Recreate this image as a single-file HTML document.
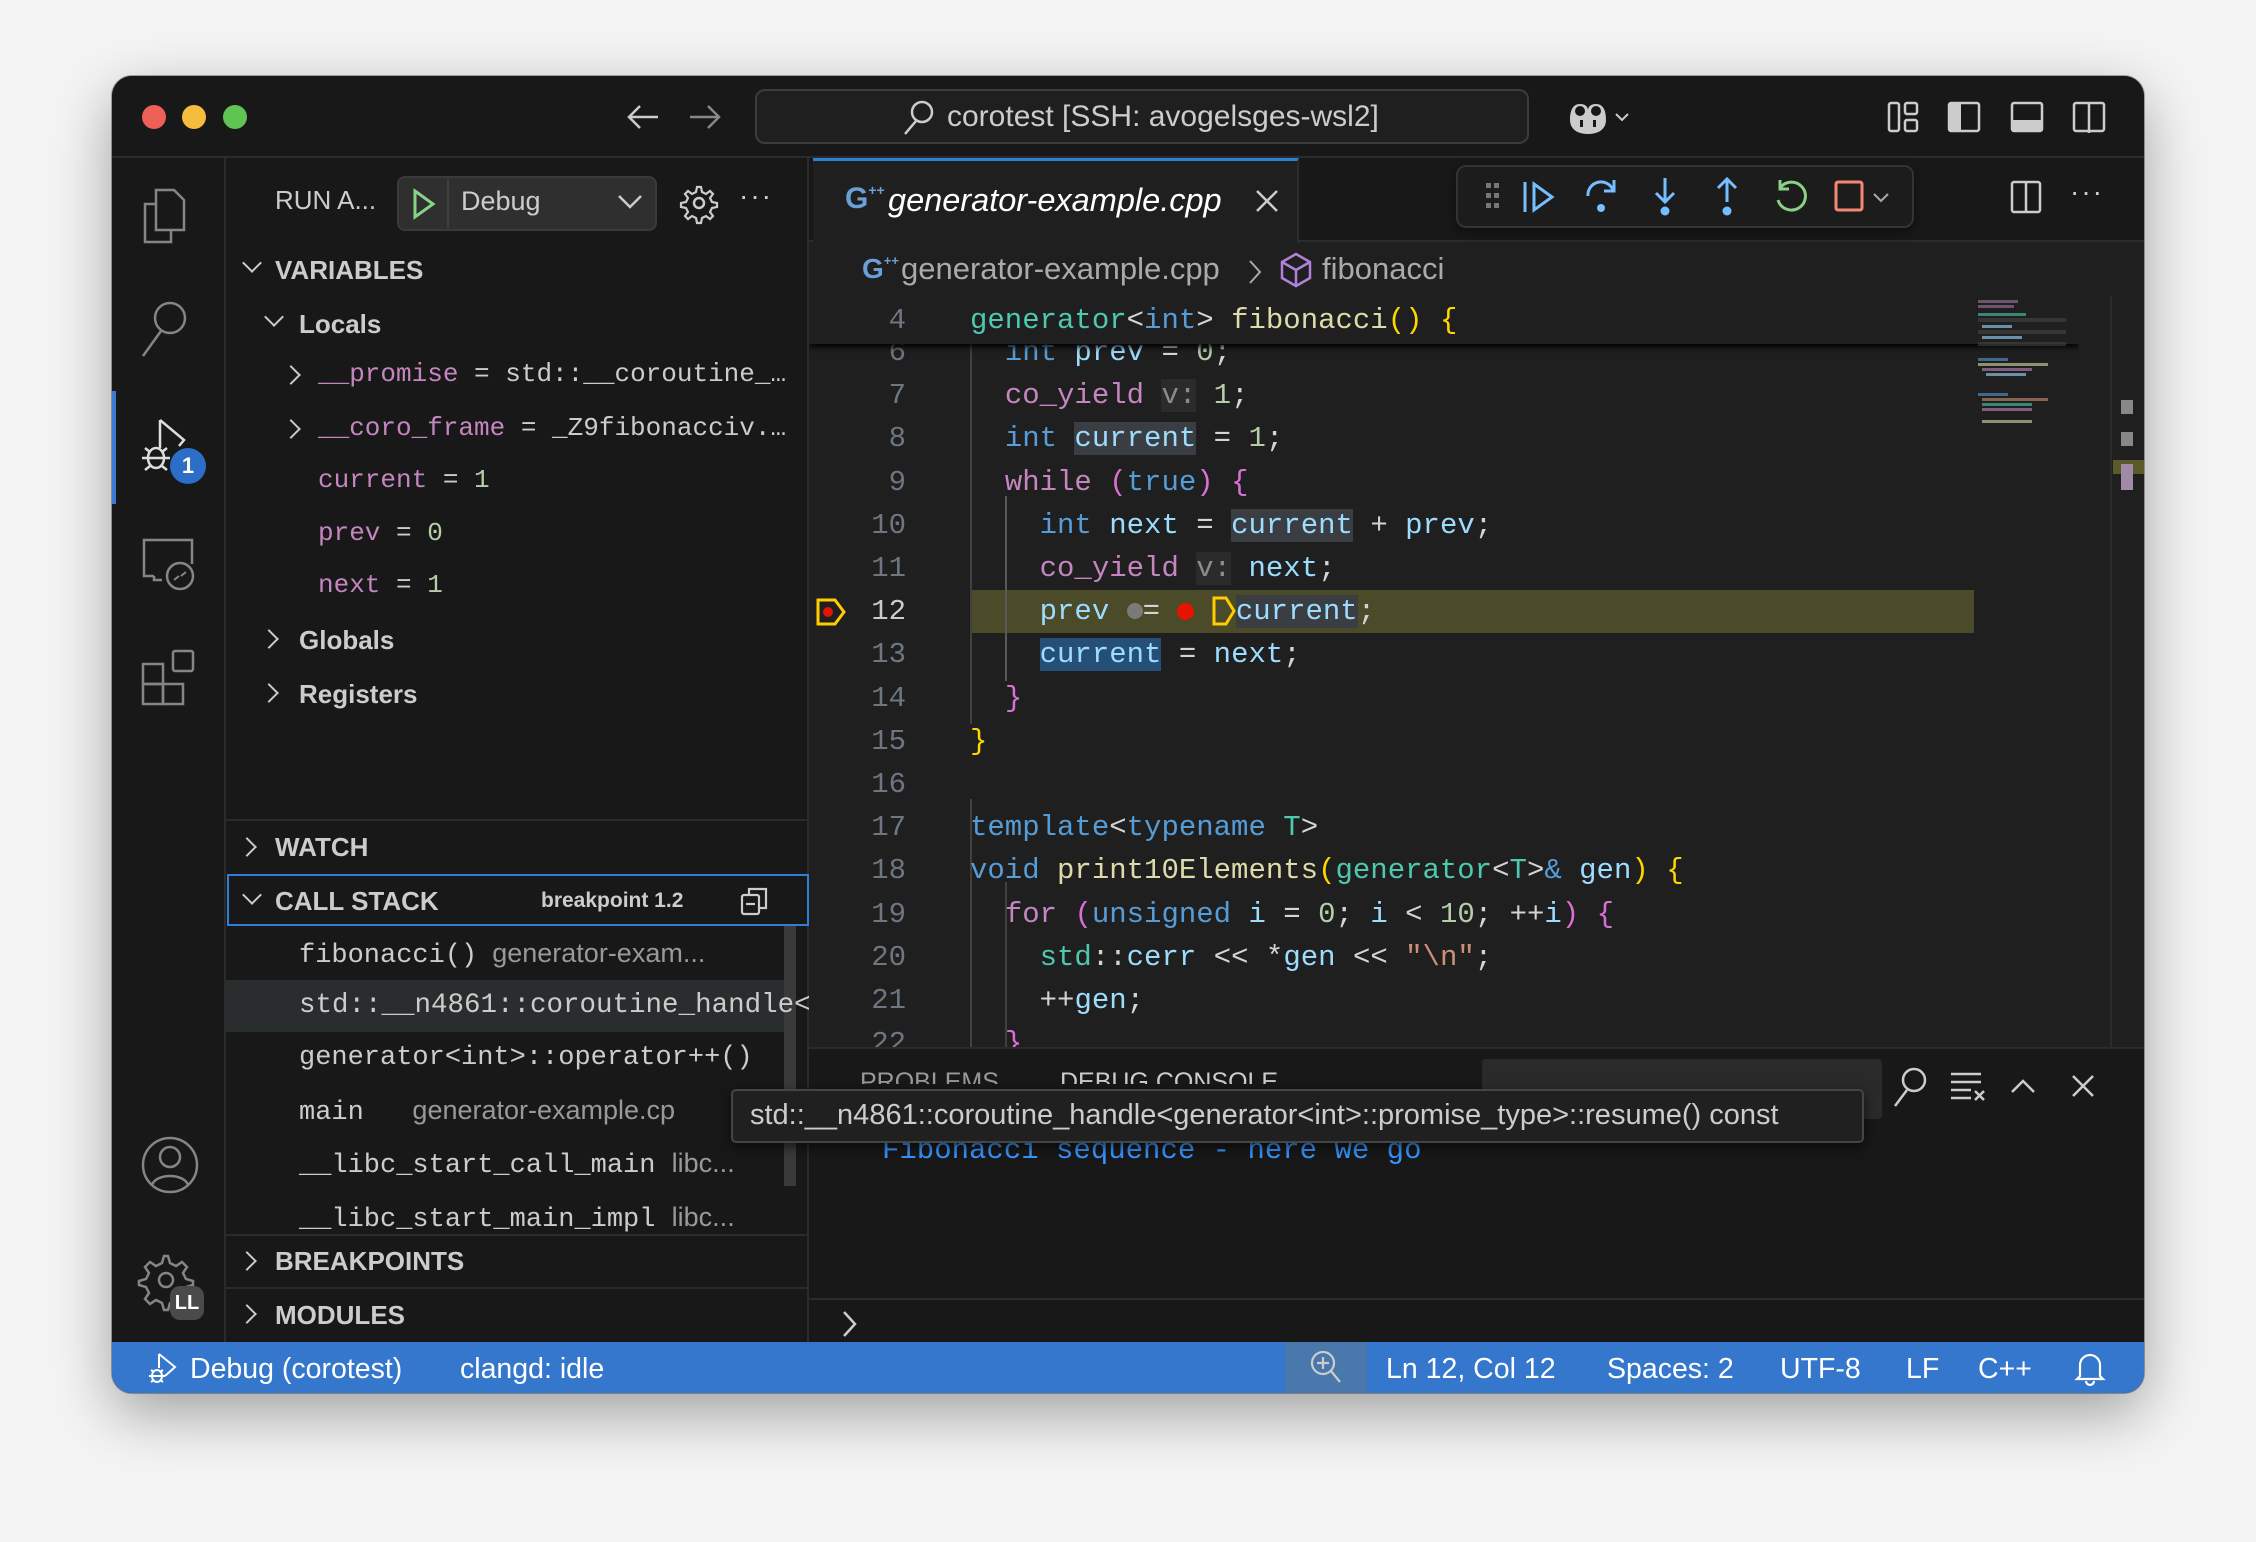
<!DOCTYPE html>
<html><head><meta charset="utf-8"><style>
*{margin:0;padding:0;box-sizing:border-box}
body{width:2256px;height:1542px;background:#f4f4f4;position:relative;overflow:hidden;font-family:"Liberation Sans",sans-serif}
.a{position:absolute}
#win{left:112px;top:76px;width:2032px;height:1317px;border-radius:20px;background:#181818;overflow:hidden;box-shadow:0 20px 60px rgba(0,0,0,.35),0 0 0 1px rgba(0,0,0,.3)}
.mono{font-family:"Liberation Mono",monospace}
.t{white-space:pre;color:#ccc}
.code{font-family:"Liberation Mono",monospace;font-size:29px;white-space:pre;height:43.2px;line-height:43.2px}
.ln{font-family:"Liberation Mono",monospace;font-size:29px;color:#6e7681;text-align:right;width:100px;line-height:43.2px;height:43.2px}
.k{color:#569cd6}.c{color:#c586c0}.ty{color:#4ec9b0}.f{color:#dcdcaa}.v{color:#9cdcfe}.n{color:#b5cea8}.s{color:#ce9178}.w{color:#d4d4d4}
.y{color:#ffd700}.p{color:#da70d6}.b{color:#179fff}
.hint{background:#2b2b2b;color:#8b8b8b}
.sel{background:#3a3d41}
.sb{font-size:26px;font-weight:bold;color:#ccc}
.var{font-family:"Liberation Mono",monospace;font-size:25.5px;white-space:pre}
.chev{width:14px;height:14px;border-right:2.5px solid #ccc;border-bottom:2.5px solid #ccc}
svg{position:absolute;overflow:visible}
</style></head><body>
<div id="win" class="a">
<!-- title bar -->
<div class="a" style="left:0;top:0;width:2032px;height:82px;background:#181818;border-bottom:2px solid #2b2b2b"></div>
<div class="a" style="left:30px;top:29px;width:24px;height:24px;border-radius:50%;background:#ee5f57"></div>
<div class="a" style="left:70px;top:29px;width:24px;height:24px;border-radius:50%;background:#f6bd3c"></div>
<div class="a" style="left:111px;top:29px;width:24px;height:24px;border-radius:50%;background:#5fc453"></div>
<svg style="left:514px;top:28px" width="34" height="26"><path d="M32 13H3M14 2L3 13l11 11" stroke="#ccc" stroke-width="2.5" fill="none"/></svg>
<svg style="left:576px;top:28px" width="34" height="26"><path d="M2 13h29M20 2l11 11-11 11" stroke="#888" stroke-width="2.5" fill="none"/></svg>
<div class="a" style="left:643px;top:13px;width:774px;height:55px;border:2px solid #3c3c3c;border-radius:10px;background:#1f1f1f"></div>
<svg style="left:790px;top:24px" width="32" height="36"><circle cx="20" cy="12" r="10" stroke="#ccc" stroke-width="2.5" fill="none"/><path d="M14 21L3 34" stroke="#ccc" stroke-width="2.5"/></svg>
<div class="a t" style="left:835px;top:24px;font-size:30px;color:#ccc">corotest [SSH: avogelsges-wsl2]</div>
<svg style="left:1452px;top:22px" width="70" height="40"><path d="M6 22c0-8 2-16 10-16s8 6 8 6 0-6 8-6 10 8 10 16-6 14-18 14S6 30 6 22z" fill="#ccc"/><ellipse cx="16" cy="13" rx="5" ry="5" fill="#181818"/><ellipse cx="32" cy="13" rx="5" ry="5" fill="#181818"/><rect x="16" y="22" width="3" height="7" fill="#181818"/><rect x="29" y="22" width="3" height="7" fill="#181818"/><path d="M52 16l6 6 6-6" stroke="#ccc" stroke-width="2" fill="none"/></svg>
<svg style="left:1775px;top:25px" width="34" height="32"><rect x="2" y="2" width="10" height="28" rx="2" stroke="#ccc" stroke-width="2.5" fill="none"/><rect x="18" y="2" width="12" height="11" rx="2" stroke="#ccc" stroke-width="2.5" fill="none"/><rect x="18" y="19" width="12" height="11" rx="2" stroke="#ccc" stroke-width="2.5" fill="none"/></svg>
<svg style="left:1835px;top:25px" width="34" height="32"><rect x="2" y="2" width="30" height="28" rx="2" stroke="#ccc" stroke-width="2.5" fill="none"/><rect x="2" y="2" width="12" height="28" fill="#ccc"/></svg>
<svg style="left:1898px;top:25px" width="34" height="32"><rect x="2" y="2" width="30" height="28" rx="2" stroke="#ccc" stroke-width="2.5" fill="none"/><rect x="2" y="19" width="30" height="11" fill="#ccc"/></svg>
<svg style="left:1960px;top:25px" width="34" height="32"><rect x="2" y="2" width="30" height="28" rx="2" stroke="#ccc" stroke-width="2.5" fill="none"/><path d="M17 2v30" stroke="#ccc" stroke-width="2.5"/></svg>

<!-- activity bar -->
<div class="a" style="left:0;top:82px;width:114px;height:1184px;background:#181818;border-right:2px solid #2b2b2b"></div>
<div class="a" style="left:0;top:315px;width:4px;height:113px;background:#3a7bd5"></div>
<svg style="left:30px;top:112px" width="44" height="56"><path d="M14 2h18l10 10v30H14z" stroke="#858585" stroke-width="2.5" fill="none"/><path d="M14 16H3v38h26V42" stroke="#858585" stroke-width="2.5" fill="none"/></svg>
<svg style="left:28px;top:222px" width="50" height="62"><circle cx="30" cy="20" r="15" stroke="#858585" stroke-width="2.5" fill="none"/><path d="M21 33L3 58" stroke="#858585" stroke-width="2.5"/></svg>
<svg style="left:28px;top:342px" width="70" height="60"><path d="M20 2v28M20 2l24 20-5 6" stroke="#ddd" stroke-width="2.5" fill="none"/><ellipse cx="16" cy="40" rx="8" ry="10" stroke="#ddd" stroke-width="2.5" fill="none"/><path d="M2 40h28M5 30l5 4M27 30l-5 4M5 52l5-4M27 52l-5-4" stroke="#ddd" stroke-width="2.5"/></svg>
<div class="a" style="left:58px;top:372px;width:36px;height:36px;border-radius:50%;background:#2c6dc7;color:#fff;font-size:22px;font-weight:bold;text-align:center;line-height:36px">1</div>
<svg style="left:28px;top:460px" width="56" height="56"><path d="M14 40H4V4h48v24M14 40v4h8" stroke="#858585" stroke-width="2.5" fill="none"/><circle cx="40" cy="40" r="13" stroke="#858585" stroke-width="2.5" fill="none"/><path d="M34 44l5-4M46 36l-5 4" stroke="#858585" stroke-width="2"/></svg>
<svg style="left:28px;top:572px" width="60" height="60"><rect x="3" y="16" width="20" height="20" stroke="#858585" stroke-width="2.5" fill="none"/><rect x="3" y="36" width="20" height="20" stroke="#858585" stroke-width="2.5" fill="none"/><rect x="23" y="36" width="20" height="20" stroke="#858585" stroke-width="2.5" fill="none"/><rect x="33" y="3" width="20" height="20" rx="2" stroke="#858585" stroke-width="2.5" fill="none"/></svg>
<svg style="left:28px;top:1059px" width="60" height="60"><circle cx="30" cy="30" r="27" stroke="#858585" stroke-width="2.5" fill="none"/><circle cx="30" cy="22" r="10" stroke="#858585" stroke-width="2.5" fill="none"/><path d="M12 50c4-12 32-12 36 0" stroke="#858585" stroke-width="2.5" fill="none"/></svg>
<svg style="left:26px;top:1176px" width="52" height="52"><path d="M26 4l4 0 2 7 6 3 6-4 5 5-4 6 3 6 7 2v4l-7 2-3 6 4 6-5 5-6-4-6 3-2 7h-4l-2-7-6-3-6 4-5-5 4-6-3-6-7-2v-4l7-2 3-6-4-6 5-5 6 4 6-3z" stroke="#858585" stroke-width="2.5" fill="none"/><circle cx="28" cy="28" r="7" stroke="#858585" stroke-width="2.5" fill="none"/></svg>
<div class="a" style="left:58px;top:1210px;width:34px;height:34px;border-radius:10px;background:#4a4a4a;color:#fff;font-size:20px;font-weight:bold;text-align:center;line-height:34px">LL</div>

<!-- sidebar -->
<div class="a" style="left:114px;top:82px;width:583px;height:1184px;background:#181818;border-right:2px solid #2b2b2b"></div>
<div class="a t" style="left:163px;top:109px;font-size:26px;color:#ccc">RUN A...</div>
<div class="a" style="left:285px;top:100px;width:260px;height:55px;border-radius:8px;background:#2f2f2f;border:2px solid #3a3a3a"></div>
<div class="a" style="left:335px;top:103px;width:2px;height:49px;background:#3f3f3f"></div>
<svg style="left:300px;top:112px" width="24" height="32"><path d="M3 3l18 13-18 13z" stroke="#89d185" stroke-width="3" fill="none"/></svg>
<div class="a t" style="left:349px;top:110px;font-size:27px;color:#ccc">Debug</div>
<svg style="left:505px;top:118px" width="26" height="16"><path d="M2 2l11 11 11-11" stroke="#ccc" stroke-width="2.5" fill="none"/></svg>
<svg style="left:568px;top:108px" width="38" height="38"><circle cx="19" cy="19" r="5" stroke="#ccc" stroke-width="2.5" fill="none"/><path d="M17 3h4l1 5 4 2 4-3 3 3-3 4 2 4 5 1v4l-5 1-2 4 3 4-3 3-4-3-4 2-1 5h-4l-1-5-4-2-4 3-3-3 3-4-2-4-5-1v-4l5-1 2-4-3-4 3-3 4 3 4-2z" stroke="#ccc" stroke-width="2.2" fill="none"/></svg>
<div class="a t" style="left:627px;top:104px;font-size:28px;color:#ccc;letter-spacing:2px">···</div>

<div class="a chev" style="left:133px;top:180px;transform:rotate(45deg)"></div>
<div class="a sb" style="left:163px;top:179px">VARIABLES</div>
<div class="a chev" style="left:155px;top:234px;transform:rotate(45deg)"></div>
<div class="a sb" style="left:187px;top:233px">Locals</div>
<div class="a chev" style="left:172px;top:292px;transform:rotate(-45deg)"></div>
<div class="a var" style="left:206px;top:283px;font-size:26px"><span class="c">__promise</span><span style="color:#ccc"> = std::__coroutine_…</span></div>
<div class="a chev" style="left:172px;top:346px;transform:rotate(-45deg)"></div>
<div class="a var" style="left:206px;top:337px;font-size:26px"><span class="c">__coro_frame</span><span style="color:#ccc"> = _Z9fibonacciv.…</span></div>
<div class="a var" style="left:206px;top:389px;font-size:26px"><span class="c">current</span><span style="color:#ccc"> = </span><span class="n">1</span></div>
<div class="a var" style="left:206px;top:442px;font-size:26px"><span class="c">prev</span><span style="color:#ccc"> = </span><span class="n">0</span></div>
<div class="a var" style="left:206px;top:494px;font-size:26px"><span class="c">next</span><span style="color:#ccc"> = </span><span class="n">1</span></div>
<div class="a chev" style="left:150px;top:556px;transform:rotate(-45deg)"></div>
<div class="a sb" style="left:187px;top:549px">Globals</div>
<div class="a chev" style="left:150px;top:610px;transform:rotate(-45deg)"></div>
<div class="a sb" style="left:187px;top:603px">Registers</div>

<div class="a" style="left:114px;top:743px;width:583px;height:2px;background:#2b2b2b"></div>
<div class="a chev" style="left:128px;top:764px;transform:rotate(-45deg)"></div>
<div class="a sb" style="left:163px;top:756px">WATCH</div>
<div class="a" style="left:115px;top:798px;width:582px;height:52px;border:2px solid #2f7fd8"></div>
<div class="a chev" style="left:133px;top:812px;transform:rotate(45deg)"></div>
<div class="a sb" style="left:163px;top:810px">CALL STACK</div>
<div class="a" style="left:429px;top:813px;font-size:21px;font-weight:bold;color:#ccc">breakpoint 1.2</div>
<svg style="left:628px;top:810px" width="30" height="30"><rect x="2" y="9" width="17" height="19" rx="2" stroke="#ccc" stroke-width="2.2" fill="none"/><path d="M9 9V3h17v19h-7" stroke="#ccc" stroke-width="2.2" fill="none"/><path d="M6 18h9" stroke="#ccc" stroke-width="2.2"/></svg>
<div class="a" style="left:114px;top:904px;width:570px;height:52px;background:#2a2d2e"></div>
<div class="a" style="left:672px;top:850px;width:12px;height:260px;background:#3a3a3a"></div>
<div class="a var" style="left:187px;top:862px;font-size:27px;color:#ccc">fibonacci()<span style="font-family:'Liberation Sans',sans-serif;color:#999">  generator-exam...</span></div>
<div class="a var" style="left:187px;top:914px;font-size:27.5px;color:#ccc;width:510px;overflow:hidden">std::__n4861::coroutine_handle&lt;g</div>
<div class="a var" style="left:187px;top:967px;font-size:27px;color:#ccc">generator&lt;int&gt;::operator++()</div>
<div class="a var" style="left:187px;top:1019px;font-size:27px;color:#ccc">main   <span style="font-family:'Liberation Sans',sans-serif;color:#999">generator-example.cp</span></div>
<div class="a var" style="left:187px;top:1072px;font-size:27px;color:#ccc">__libc_start_call_main <span style="font-family:'Liberation Sans',sans-serif;color:#999">libc...</span></div>
<div class="a var" style="left:187px;top:1126px;font-size:27px;color:#ccc">__libc_start_main_impl <span style="font-family:'Liberation Sans',sans-serif;color:#999">libc...</span></div>
<div class="a" style="left:114px;top:1158px;width:583px;height:2px;background:#2b2b2b"></div>
<div class="a chev" style="left:128px;top:1178px;transform:rotate(-45deg)"></div>
<div class="a sb" style="left:163px;top:1170px">BREAKPOINTS</div>
<div class="a" style="left:114px;top:1211px;width:583px;height:2px;background:#2b2b2b"></div>
<div class="a chev" style="left:128px;top:1231px;transform:rotate(-45deg)"></div>
<div class="a sb" style="left:163px;top:1224px">MODULES</div>

<!-- editor -->
<div class="a" style="left:697px;top:82px;width:1335px;height:889px;background:#1f1f1f"></div>
<div class="a" style="left:697px;top:82px;width:1335px;height:84px;background:#181818;border-bottom:2px solid #2b2b2b"></div>
<div class="a" style="left:701px;top:82px;width:486px;height:85px;background:#1f1f1f;border-top:3px solid #2f7fd8;border-right:2px solid #2b2b2b"></div>
<div class="a" style="left:733px;top:106px;font-size:30px;font-weight:bold;color:#6a9fd8">G<span style="font-size:14px;vertical-align:top">++</span></div>
<div class="a t" style="left:776px;top:106px;font-size:32.5px;font-style:italic;color:#fff">generator-example.cpp</div>
<svg style="left:1143px;top:113px" width="24" height="24"><path d="M2 2l20 20M22 2L2 22" stroke="#ccc" stroke-width="2.5"/></svg>
<div class="a" style="left:1344px;top:89px;width:458px;height:63px;border-radius:10px;background:#1c1c1c;border:2px solid #333;box-shadow:0 4px 10px rgba(0,0,0,.4)"></div>
<svg style="left:1374px;top:107px" width="14" height="28"><g fill="#777"><rect x="0" y="0" width="5" height="5"/><rect x="8" y="0" width="5" height="5"/><rect x="0" y="10" width="5" height="5"/><rect x="8" y="10" width="5" height="5"/><rect x="0" y="20" width="5" height="5"/><rect x="8" y="20" width="5" height="5"/></g></svg>
<svg style="left:1410px;top:104px" width="34" height="34"><path d="M3 2v30M12 4l18 13-18 13z" stroke="#75beff" stroke-width="3" fill="none"/></svg>
<svg style="left:1472px;top:100px" width="36" height="40"><path d="M4 20a13 13 0 0 1 25-6M30 4v11H20" stroke="#75beff" stroke-width="3" fill="none"/><circle cx="17" cy="32" r="4" fill="#75beff"/></svg>
<svg style="left:1539px;top:100px" width="28" height="42"><path d="M14 2v24M5 17l9 9 9-9" stroke="#75beff" stroke-width="3" fill="none"/><circle cx="14" cy="35" r="4.5" fill="#75beff"/></svg>
<svg style="left:1601px;top:100px" width="28" height="42"><path d="M14 26V3M5 12l9-9 9 9" stroke="#75beff" stroke-width="3" fill="none"/><circle cx="14" cy="35" r="4.5" fill="#75beff"/></svg>
<svg style="left:1660px;top:102px" width="36" height="38"><path d="M8 10a14 14 0 1 1-2 12M8 2v9h9" stroke="#89d185" stroke-width="3" fill="none"/></svg>
<svg style="left:1722px;top:104px" width="60" height="36"><rect x="2" y="2" width="26" height="28" rx="2" stroke="#f48771" stroke-width="3" fill="none"/><path d="M40 14l7 7 7-7" stroke="#aaa" stroke-width="2" fill="none"/></svg>
<svg style="left:1898px;top:104px" width="32" height="34"><rect x="2" y="2" width="28" height="30" rx="2" stroke="#ccc" stroke-width="2.5" fill="none"/><path d="M16 2v30" stroke="#ccc" stroke-width="2.5"/></svg>
<div class="a t" style="left:1958px;top:100px;font-size:28px;color:#ccc;letter-spacing:2px">···</div>

<!-- breadcrumb -->
<div class="a" style="left:750px;top:177px;font-size:28px;font-weight:bold;color:#6a9fd8">G<span style="font-size:13px;vertical-align:top">++</span></div>
<div class="a t" style="left:789px;top:175px;font-size:31px;color:#aaa">generator-example.cpp</div>
<svg style="left:1136px;top:183px" width="14" height="26"><path d="M2 2l10 11-10 11" stroke="#aaa" stroke-width="2" fill="none"/></svg>
<svg style="left:1168px;top:176px" width="32" height="36"><path d="M16 2l14 8v16l-14 8-14-8V10zM2 10l14 8 14-8M16 18v16" stroke="#b180d7" stroke-width="2.5" fill="none"/></svg>
<div class="a t" style="left:1210px;top:175px;font-size:31px;color:#aaa">fibonacci</div>

<!-- code area -->
<div class="a" style="left:697px;top:223px;width:1270px;height:748px;overflow:hidden">
 <div class="a" style="left:161px;top:291px;width:1004px;height:43px;background:#4b4a29"></div>
 <div class="a" style="left:161px;top:23px;width:2px;height:402px;background:#404040"></div>
 <div class="a" style="left:196px;top:197px;width:2px;height:185px;background:#585858"></div>
 <div class="a" style="left:196px;top:583px;width:2px;height:170px;background:#404040"></div>
 <div class="a" style="left:161px;top:500px;width:2px;height:260px;background:#404040"></div>
 <svg style="left:6px;top:298px" width="32" height="30"><path d="M3 3h17l9 12-9 12H3z" stroke="#ffcc00" stroke-width="3" fill="none"/><circle cx="13" cy="15" r="5" fill="#e51400"/></svg>
 <div class="a ln" style="left:-3px;top:32px">6</div><div class="a code" style="left:161px;top:32px"><span class="k">  int</span> <span class="v">prev</span> <span class="w">=</span> <span class="n">0</span><span class="w">;</span></div>
 <div class="a ln" style="left:-3px;top:75px">7</div><div class="a code" style="left:161px;top:75px">  <span class="c">co_yield</span> <span class="hint">v:</span> <span class="n">1</span><span class="w">;</span></div>
 <div class="a ln" style="left:-3px;top:118px">8</div><div class="a code" style="left:161px;top:118px">  <span class="k">int</span> <span class="v sel">current</span> <span class="w">=</span> <span class="n">1</span><span class="w">;</span></div>
 <div class="a ln" style="left:-3px;top:162px">9</div><div class="a code" style="left:161px;top:162px">  <span class="c">while</span> <span class="p">(</span><span class="k">true</span><span class="p">)</span> <span class="p">{</span></div>
 <div class="a ln" style="left:-3px;top:205px">10</div><div class="a code" style="left:161px;top:205px">    <span class="k">int</span> <span class="v">next</span> <span class="w">=</span> <span class="v sel">current</span> <span class="w">+</span> <span class="v">prev</span><span class="w">;</span></div>
 <div class="a ln" style="left:-3px;top:248px">11</div><div class="a code" style="left:161px;top:248px">    <span class="c">co_yield</span> <span class="hint">v:</span> <span class="v">next</span><span class="w">;</span></div>
 <div class="a ln" style="left:-3px;top:291px;color:#ccc">12</div><div class="a code" style="left:161px;top:291px">    <span class="v">prev</span> <span style="display:inline-block;width:16px;height:16px;border-radius:50%;background:#7a7a7a;vertical-align:middle"></span><span class="w">=</span> <span style="display:inline-block;width:17px;height:17px;border-radius:50%;background:#e51400;vertical-align:middle"></span> <svg style="position:relative;display:inline-block;vertical-align:middle" width="24" height="32"><path d="M2 3h12l8 13-8 13H2z" stroke="#ffcc00" stroke-width="3" fill="none"/></svg><span class="v sel">current</span><span class="w">;</span></div>
 <div class="a ln" style="left:-3px;top:334px">13</div><div class="a code" style="left:161px;top:334px">    <span class="v" style="background:#264f78">current</span> <span class="w">=</span> <span class="v">next</span><span class="w">;</span></div>
 <div class="a ln" style="left:-3px;top:378px">14</div><div class="a code" style="left:161px;top:378px">  <span class="p">}</span></div>
 <div class="a ln" style="left:-3px;top:421px">15</div><div class="a code" style="left:161px;top:421px"><span class="y">}</span></div>
 <div class="a ln" style="left:-3px;top:464px">16</div>
 <div class="a ln" style="left:-3px;top:507px">17</div><div class="a code" style="left:161px;top:507px"><span class="k">template</span><span class="w">&lt;</span><span class="k">typename</span> <span class="ty">T</span><span class="w">&gt;</span></div>
 <div class="a ln" style="left:-3px;top:550px">18</div><div class="a code" style="left:161px;top:550px"><span class="k">void</span> <span class="f">print10Elements</span><span class="y">(</span><span class="ty">generator</span><span class="w">&lt;</span><span class="ty">T</span><span class="w">&gt;</span><span class="k">&amp;</span> <span class="v">gen</span><span class="y">)</span> <span class="y">{</span></div>
 <div class="a ln" style="left:-3px;top:594px">19</div><div class="a code" style="left:161px;top:594px">  <span class="c">for</span> <span class="p">(</span><span class="k">unsigned</span> <span class="v">i</span> <span class="w">=</span> <span class="n">0</span><span class="w">;</span> <span class="v">i</span> <span class="w">&lt;</span> <span class="n">10</span><span class="w">;</span> <span class="w">++</span><span class="v">i</span><span class="p">)</span> <span class="p">{</span></div>
 <div class="a ln" style="left:-3px;top:637px">20</div><div class="a code" style="left:161px;top:637px">    <span class="ty">std</span><span class="w">::</span><span class="v">cerr</span> <span class="w">&lt;&lt;</span> <span class="w">*</span><span class="v">gen</span> <span class="w">&lt;&lt;</span> <span class="s">"\n"</span><span class="w">;</span></div>
 <div class="a ln" style="left:-3px;top:680px">21</div><div class="a code" style="left:161px;top:680px">    <span class="w">++</span><span class="v">gen</span><span class="w">;</span></div>
 <div class="a ln" style="left:-3px;top:723px">22</div><div class="a code" style="left:161px;top:723px">  <span class="p">}</span></div>
 <!-- sticky -->
 <div class="a" style="left:0;top:0;width:1270px;height:45px;background:#1f1f1f;box-shadow:0 3px 6px #000"></div>
 <div class="a ln" style="left:-3px;top:0">4</div><div class="a code" style="left:161px;top:0"><span class="ty">generator</span><span class="w">&lt;</span><span class="k">int</span><span class="w">&gt;</span> <span class="f">fibonacci</span><span class="y">()</span> <span class="y">{</span></div>
</div>
<!-- minimap -->
<div class="a" style="left:1866px;top:222px;width:92px;height:135px;opacity:.6">
 <div class="a" style="left:0;top:2px;width:40px;height:3px;background:#a07aa0"></div>
 <div class="a" style="left:0;top:7px;width:36px;height:3px;background:#a07aa0"></div>
 <div class="a" style="left:0;top:15px;width:48px;height:3px;background:#4ec9b0"></div>
 <div class="a" style="left:0;top:20px;width:88px;height:4px;background:#444"></div>
 <div class="a" style="left:4px;top:27px;width:30px;height:3px;background:#9cdcfe"></div>
 <div class="a" style="left:0;top:32px;width:88px;height:4px;background:#444"></div>
 <div class="a" style="left:4px;top:38px;width:40px;height:3px;background:#9cdcfe"></div>
 <div class="a" style="left:0;top:44px;width:88px;height:4px;background:#444"></div>
 <div class="a" style="left:0;top:60px;width:30px;height:3px;background:#569cd6"></div>
 <div class="a" style="left:0;top:65px;width:70px;height:3px;background:#dcdcaa"></div>
 <div class="a" style="left:4px;top:70px;width:50px;height:3px;background:#c586c0"></div>
 <div class="a" style="left:8px;top:75px;width:40px;height:3px;background:#9cdcfe"></div>
 <div class="a" style="left:0;top:95px;width:30px;height:3px;background:#569cd6"></div>
 <div class="a" style="left:4px;top:100px;width:66px;height:3px;background:#ce9178"></div>
 <div class="a" style="left:4px;top:105px;width:50px;height:3px;background:#4ec9b0"></div>
 <div class="a" style="left:4px;top:110px;width:50px;height:3px;background:#c586c0"></div>
 <div class="a" style="left:4px;top:122px;width:50px;height:3px;background:#dcdcaa"></div>
</div>
<div class="a" style="left:1998px;top:220px;width:2px;height:751px;background:#2b2b2b"></div>
<div class="a" style="left:2009px;top:324px;width:12px;height:14px;background:#888"></div>
<div class="a" style="left:2009px;top:356px;width:12px;height:14px;background:#888"></div>
<div class="a" style="left:2001px;top:384px;width:31px;height:14px;background:#5a5a2a"></div>
<div class="a" style="left:2009px;top:388px;width:12px;height:26px;background:#a08aa8"></div>

<!-- panel -->
<div class="a" style="left:697px;top:971px;width:1335px;height:295px;background:#181818;border-top:2px solid #2b2b2b"></div>
<div class="a t" style="left:748px;top:992px;font-size:25px;color:#999;height:16px;overflow:hidden">PROBLEMS</div>
<div class="a t" style="left:948px;top:992px;font-size:25px;color:#ccc;height:16px;overflow:hidden">DEBUG CONSOLE</div>
<div class="a" style="left:1370px;top:983px;width:400px;height:60px;background:#2a2a2a;border-radius:4px"></div>
<svg style="left:1780px;top:990px" width="36" height="42"><circle cx="22" cy="14" r="11" stroke="#ccc" stroke-width="2.5" fill="none"/><path d="M15 24L3 40" stroke="#ccc" stroke-width="2.5"/></svg>
<svg style="left:1837px;top:995px" width="38" height="32"><path d="M2 3h30M2 11h30M2 19h20M2 27h20M26 20l9 9M35 20l-9 9" stroke="#ccc" stroke-width="2.5" fill="none"/></svg>
<svg style="left:1898px;top:1002px" width="26" height="16"><path d="M2 14l11-11 11 11" stroke="#ccc" stroke-width="2.5" fill="none"/></svg>
<svg style="left:1959px;top:998px" width="24" height="24"><path d="M2 2l20 20M22 2L2 22" stroke="#ccc" stroke-width="2.5"/></svg>
<div class="a code" style="left:770px;top:1053px;color:#3794ff;font-size:29px">Fibonacci sequence - here we go</div>
<div class="a" style="left:697px;top:1222px;width:1335px;height:2px;background:#2b2b2b"></div>
<svg style="left:730px;top:1234px" width="16" height="28"><path d="M2 2l11 12-11 12" stroke="#ccc" stroke-width="2.5" fill="none"/></svg>

<!-- tooltip -->
<div class="a" style="left:619px;top:1013px;width:1133px;height:54px;background:#202020;border:2px solid #454545;border-radius:5px;box-shadow:0 4px 12px rgba(0,0,0,.6)"></div>
<div class="a t" style="left:638px;top:1023px;font-size:29px;color:#ccc">std::__n4861::coroutine_handle&lt;generator&lt;int&gt;::promise_type&gt;::resume() const</div>

<!-- status bar -->
<div class="a" style="left:0;top:1266px;width:2032px;height:51px;background:#3477cc"></div>
<div class="a" style="left:1173px;top:1266px;width:82px;height:51px;background:#4a78ad"></div>
<svg style="left:1197px;top:1273px" width="36" height="38"><circle cx="14" cy="14" r="11" stroke="#ccc" stroke-width="2.2" fill="none"/><path d="M14 8v12M8 14h12M22 22l9 11" stroke="#ccc" stroke-width="2.2"/></svg>
<svg style="left:35px;top:1276px" width="34" height="34"><path d="M12 2v14M12 2l16 13-10 9" stroke="#fff" stroke-width="2" fill="none"/><ellipse cx="10" cy="24" rx="5" ry="6" stroke="#fff" stroke-width="2" fill="none"/><path d="M2 24h16M4 18l3 2M4 30l3-2M16 18l-3 2M16 30l-3-2" stroke="#fff" stroke-width="2"/></svg>
<div class="a t" style="left:78px;top:1277px;color:#fff;font-size:28.5px">Debug (corotest)</div>
<div class="a t" style="left:348px;top:1277px;color:#fff;font-size:28.5px">clangd: idle</div>
<div class="a t" style="left:1274px;top:1277px;color:#fff;font-size:28.5px">Ln 12, Col 12</div>
<div class="a t" style="left:1495px;top:1277px;color:#fff;font-size:28.5px">Spaces: 2</div>
<div class="a t" style="left:1668px;top:1277px;color:#fff;font-size:28.5px">UTF-8</div>
<div class="a t" style="left:1794px;top:1277px;color:#fff;font-size:28.5px">LF</div>
<div class="a t" style="left:1866px;top:1277px;color:#fff;font-size:28.5px">C++</div>
<svg style="left:1964px;top:1274px" width="28" height="36"><path d="M4 26V15a10 10 0 0 1 20 0v11l3 3H1z" stroke="#fff" stroke-width="2.2" fill="none"/><path d="M10 31a4 4 0 0 0 8 0" stroke="#fff" stroke-width="2.2" fill="none"/></svg>
</div>
</body></html>
